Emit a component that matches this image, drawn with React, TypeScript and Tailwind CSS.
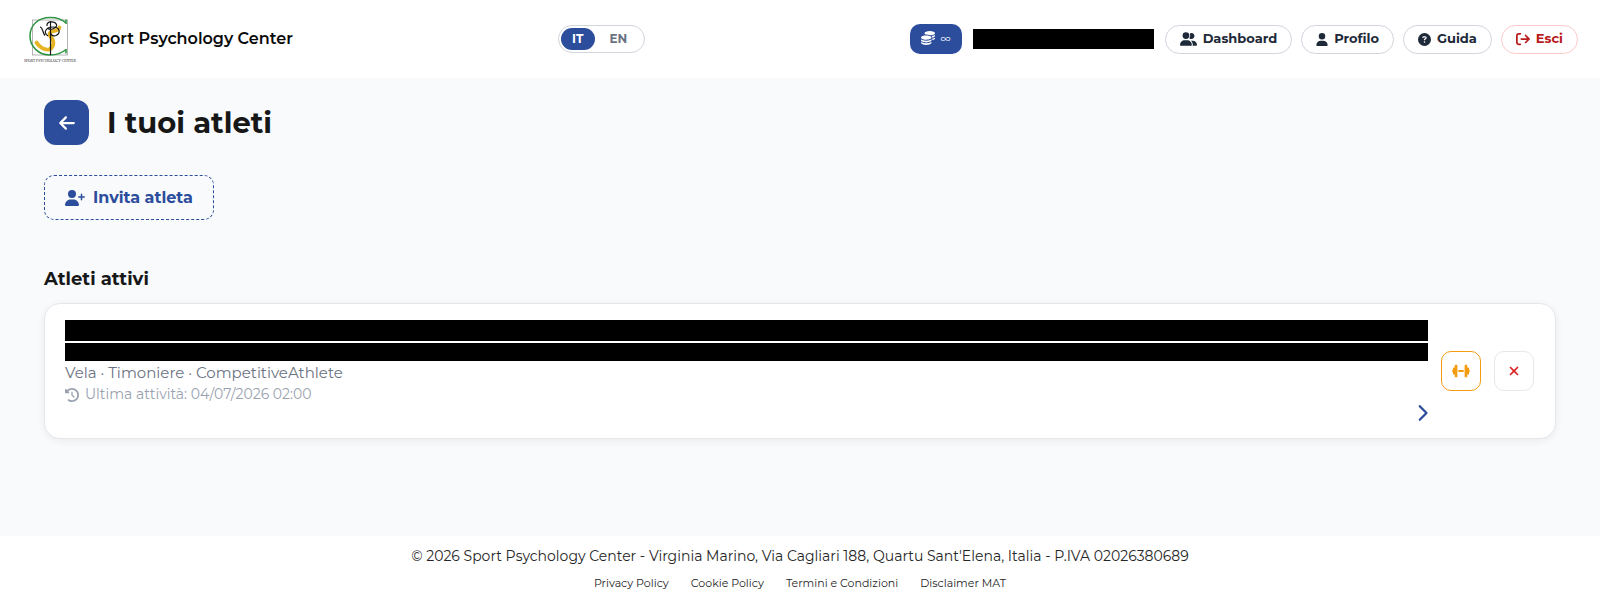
import React, { useState } from 'react';
import {
  FaArrowLeft, FaArrowRightFromBracket, FaChevronRight, FaCircleQuestion,
  FaClockRotateLeft, FaCoins, FaDumbbell, FaUser, FaUserGroup, FaUserPlus, FaXmark
} from 'react-icons/fa6';

const navItems = [
  { label: 'Dashboard', icon: FaUserGroup, iconSize: 'w-[17px] h-3.5' },
  { label: 'Profilo', icon: FaUser, iconSize: 'w-3 h-[13px]' },
  { label: 'Guida', icon: FaCircleQuestion, iconSize: 'w-[13px] h-[13px]' }
];

const footerLinks = ['Privacy Policy', 'Cookie Policy', 'Termini e Condizioni', 'Disclaimer MAT'];

const Logo = () => (
  <svg viewBox="0 0 56 48" className="w-14 h-12" role="img" aria-label="Sport Psychology Center">
    <rect x="10.500" y="5" width="35" height="35" fill="none" stroke="#a3a3a3" strokeWidth="0.8" />
    <path d="M44 8C40 4 34 2.500 28 2.500C16 2.500 8 10.500 8 21C8 32 17 40 28 40C35 40 40 38 44 34.500M44 4.500V9M44 34V38.500" fill="none" stroke="#2c9440" strokeWidth="1.500" />
    <path d="M37.500 12.500C36 17 32 15 29 17C26 19 28 21 30 23.500C32.500 27 31.500 33 27 34.500C22 35.500 17 31.500 14.500 27.500" fill="none" stroke="#e6b422" strokeWidth="3.800" strokeLinecap="round" />
    <path d="M28.500 6V40" fill="none" stroke="#171717" strokeWidth="1.200" />
    <path d="M18 12C21 12 20 17 23 20.500M25 11C24 5.500 33 6 34.500 9.500C35.500 13 28 16 25 13M26 21C20 17 25 12 31 12C38 12 39 18 34 20.500C31 21.500 29 20 28.500 18" fill="none" stroke="#171717" strokeWidth="1.200" />
    <text x="28" y="46.500" textAnchor="middle" fontSize="3.700" fill="#262626" fontFamily="Liberation Serif, serif">SPORT PSYCHOLOGY CENTER</text>
  </svg>
);

const Header = () => {
  const [language, setLanguage] = useState('IT');

  return (
    <header className="flex items-center justify-between h-[78px] px-[22px] bg-white">
      <div className="flex items-center gap-[11px]">
        <Logo />
        <span className="text-base font-semibold text-[#0a0a0a]">Sport Psychology Center</span>
      </div>
      <div className="flex items-center p-0.5 h-7 rounded-full border border-gray-300">
        {['IT', 'EN'].map((lang) => (
          <button
            key={lang}
            type="button"
            aria-pressed={language === lang}
            onClick={() => setLanguage(lang)}
            className={`h-[22px] rounded-full text-xs font-bold ${lang === 'IT' ? 'w-[34px]' : 'w-[47px]'} ${language === lang ? 'bg-[#2c4c9c] text-white' : 'text-gray-500'}`}
          >
            {lang}
          </button>
        ))}
      </div>
      <nav className="flex items-center gap-[9px]">
        <button type="button" className="flex items-center justify-center gap-1.5 w-[52px] h-[30px] rounded-[10px] bg-[#2c4c9c] text-white">
          <FaCoins className="w-3.5 h-3.5 mb-0.5" />
          <span className="text-[11px]">∞</span>
        </button>
        <div className="w-[181px] h-5 mx-0.5 bg-black" />
        {navItems.map(({ label, icon: Icon, iconSize }) => (
          <a key={label} href="#" className="flex items-center gap-1.5 h-[29px] px-3.5 rounded-full border border-gray-300 text-[13px] font-bold text-gray-800">
            <Icon className={iconSize} />
            {label}
          </a>
        ))}
        <button type="button" className="flex items-center gap-1.5 h-[29px] px-3.5 rounded-full border border-[#fecaca] text-[13px] font-bold text-[#b91c1c]">
          <FaArrowRightFromBracket className="w-3.5 h-3.5" />
          Esci
        </button>
      </nav>
    </header>
  );
};

const AthleteCard = () => (
  <article className="flex items-center gap-[13px] pl-5 pr-[21px] py-4 bg-white rounded-2xl border border-gray-200 shadow-[0_2px_8px_rgba(0,0,0,0.06)]">
    <div className="flex flex-1 flex-col">
      <div className="h-[21px] bg-black" />
      <div className="h-[18px] mt-0.5 bg-black" />
      <p className="text-[15px] leading-6 text-gray-500">Vela · Timoniere · CompetitiveAthlete</p>
      <p className="flex items-center gap-1.5 text-sm leading-[19px] text-gray-400">
        <FaClockRotateLeft className="w-3.5 h-3.5" />
        Ultima attività: 04/07/2026 02:00
      </p>
      <button type="button" aria-label="Apri atleta" className="self-end text-[#2c4c9c]">
        <FaChevronRight className="w-3 h-[18px]" />
      </button>
    </div>
    <button type="button" aria-label="Allenamento" className="flex items-center justify-center w-10 h-10 rounded-[10px] border border-[#f39c12] text-[#f39c12]">
      <FaDumbbell className="w-[18px] h-4" />
    </button>
    <button type="button" aria-label="Rimuovi" className="flex items-center justify-center w-10 h-10 rounded-[10px] border border-gray-200 text-[#dc2626]">
      <FaXmark className="w-3.5 h-3.5" />
    </button>
  </article>
);

const Footer = () => (
  <footer className="px-4 pt-2.5 pb-[19px] bg-white text-center text-neutral-800">
    <p className="text-sm leading-5">
      © 2026 Sport Psychology Center - Virginia Marino, Via Cagliari 188, Quartu Sant'Elena, Italia - P.IVA 02026380689
    </p>
    <div className="flex justify-center gap-[22px] mt-2 text-[11px] leading-[18px]">
      {footerLinks.map((link) => (
        <a key={link} href="#">{link}</a>
      ))}
    </div>
  </footer>
);

const App = () => (
  <div className="flex flex-col min-h-screen bg-[#f8fafc] font-[Montserrat,Inter,sans-serif]">
    <Header />
    <main className="flex-1 px-11 pt-[22px]">
      <div className="flex items-center gap-[18px]">
        <button type="button" aria-label="Indietro" className="flex items-center justify-center w-[45px] h-[45px] rounded-xl bg-[#2c4c9c] text-white">
          <FaArrowLeft className="w-[18px] h-[18px]" />
        </button>
        <h1 className="text-[29px] leading-9 font-bold text-neutral-900">I tuoi atleti</h1>
      </div>
      <button type="button" className="flex items-center gap-2 h-[45px] mt-[30px] px-5 rounded-[10px] border border-dashed border-[#2c4c9c] text-base font-bold text-[#2c4c9c]">
        <FaUserPlus className="w-5 h-4" />
        Invita atleta
      </button>
      <h2 className="mt-[46px] mb-2.5 text-lg leading-[27px] font-bold text-neutral-900">Atleti attivi</h2>
      <AthleteCard />
    </main>
    <Footer />
  </div>
);

export default App;
